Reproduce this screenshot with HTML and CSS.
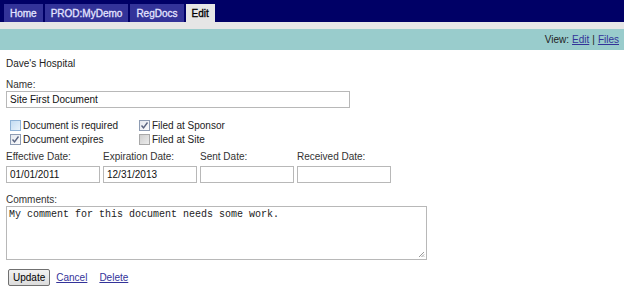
FILE: index.html
```html
<!DOCTYPE html>
<html>
<head>
<meta charset="utf-8">
<link rel="stylesheet" href="styles.css">
</head>
<body>
<div class="topbar">
  <nav class="tabs">
    <a class="tab">Home</a>
    <a class="tab">PROD:MyDemo</a>
    <a class="tab">RegDocs</a>
    <a class="tab active">Edit</a>
  </nav>
</div>
<div class="strip"></div>
<div class="subbar">View: <a href="#">Edit</a> | <a href="#">Files</a></div>
<main class="content">
  <div class="site">Dave's Hospital</div>
  <div class="label">Name:</div>
  <div class="field name">Site First Document</div>
  <div class="checks">
    <div class="col">
      <div class="check"><span class="box blue"></span>Document is required</div>
      <div class="check"><span class="box"><svg viewBox="0 0 11 11" width="11" height="11"><path d="M2.5 5.5 L4.5 7.8 L8.5 2.5" fill="none" stroke="#5a6480" stroke-width="1.4"/></svg></span>Document expires</div>
    </div>
    <div class="col">
      <div class="check"><span class="box"><svg viewBox="0 0 11 11" width="11" height="11"><path d="M2.5 5.5 L4.5 7.8 L8.5 2.5" fill="none" stroke="#5a6480" stroke-width="1.4"/></svg></span>Filed at Sponsor</div>
      <div class="check"><span class="box gray"></span>Filed at Site</div>
    </div>
  </div>
  <div class="dates">
    <div class="date"><div class="label">Effective Date:</div><div class="field">01/01/2011</div></div>
    <div class="date"><div class="label">Expiration Date:</div><div class="field">12/31/2013</div></div>
    <div class="date"><div class="label">Sent Date:</div><div class="field"></div></div>
    <div class="date"><div class="label">Received Date:</div><div class="field"></div></div>
  </div>
  <div class="label comments-label">Comments:</div>
  <div class="comments">My comment for this document needs some work.<svg class="grip" viewBox="0 0 8 8" width="8" height="8"><path d="M7 2 L2 7 M7 4.5 L4.5 7 M7 6.5 L6.5 7" stroke="#999" stroke-width="1"/></svg></div>
  <div class="actions">
    <button class="btn">Update</button>
    <a href="#">Cancel</a>
    <a href="#" class="delete">Delete</a>
  </div>
</main>
</body>
</html>
```
FILE: styles.css
```css
body {
  margin: 0;
  font-family: "Liberation Sans", Arial, sans-serif;
  font-size: 10px;
  color: #222;
  background: #fff;
}
a { color: #333399; text-decoration: underline; }
.topbar {
  background: #000066;
  height: 22px;
  padding: 4px 0 0 4px;
  box-sizing: border-box;
  display: flex;
  align-items: flex-end;
}
.tabs { display: flex; gap: 2px; height: 18px; }
.tab {
  display: flex;
  align-items: center;
  padding: 0 6px;
  background: #333399;
  color: #e4e4ff;
  font-size: 10px;
  -webkit-text-stroke: 0.3px #e4e4ff;
  text-decoration: none;
}
.tab.active { background: #e6e6e6; color: #000; -webkit-text-stroke: 0.3px #000; }
.strip { height: 7px; background: #e6e6e6; }
.subbar {
  height: 21px;
  background: #99cccc;
  display: flex;
  align-items: center;
  justify-content: flex-end;
  padding-right: 5px;
  color: #222;
  gap: 3px;
}
.content { padding: 7px 6px 0 6px; }
.site { line-height: 14px; margin-bottom: 7px; }
.label { line-height: 13px; color: #333; }
.field {
  height: 17px;
  box-sizing: border-box;
  border: 1px solid #b8b8b8;
  padding: 0 3px;
  line-height: 15px;
  color: #111;
  background: #fff;
}
.name { width: 344px; }
.checks { display: flex; margin: 10px 0 4px 4px; }
.col { display: flex; flex-direction: column; width: 129px; flex: none; }
.check { display: flex; align-items: center; height: 14px; gap: 2px; white-space: nowrap; }
.box {
  flex: none;
  width: 11px;
  height: 11px;
  box-sizing: border-box;
  border: 1px solid #8e9cb3;
  background: linear-gradient(135deg, #e4e8ee, #fbfbfc);
  display: inline-block;
}
.box svg { display: block; margin: -1px; }
.box.blue { border-color: #8fb2d6; background: linear-gradient(135deg, #c4dcf2, #e8f2fb); }
.box.gray { border-color: #a8a8a8; background: linear-gradient(135deg, #cfcfcf, #ececec); }
.dates { display: flex; gap: 3px; }
.date { width: 94px; }
.date .label { margin-bottom: 3px; }
.comments-label { margin-top: 10px; }
.comments {
  position: relative;
  width: 421px;
  height: 54px;
  box-sizing: border-box;
  border: 1px solid #b8b8b8;
  padding: 2px 2px;
  font-family: "Liberation Mono", "Courier New", monospace;
  font-size: 10px;
  color: #222;
}
.grip { position: absolute; right: 1px; bottom: 1px; }
.actions { display: flex; align-items: center; margin-top: 9px; gap: 6px; padding-left: 2px; }
.actions .delete { margin-left: 6px; }
.btn {
  font-family: "Liberation Sans", Arial, sans-serif;
  font-size: 10px;
  height: 17px;
  padding: 0 4px;
  border: 1px solid #707070;
  border-radius: 2px;
  background: linear-gradient(#f2f2f2, #dcdcdc);
  color: #000;
}
```
